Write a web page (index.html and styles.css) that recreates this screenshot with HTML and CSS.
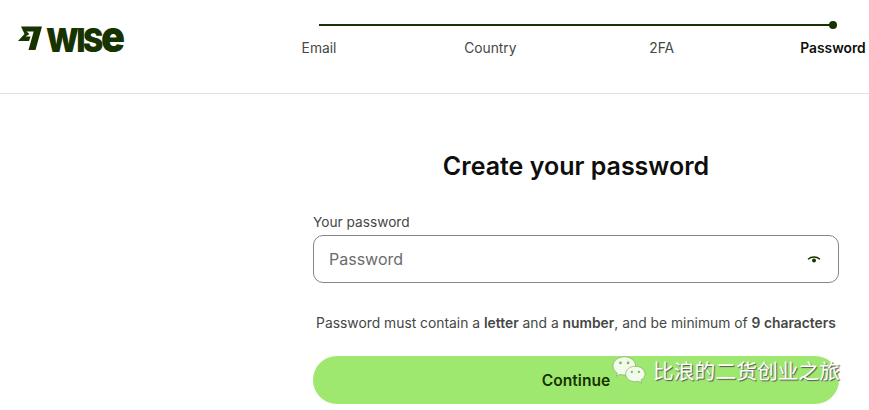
FILE: index.html
```html
<!DOCTYPE html>
<html lang="en">
<head>
  <meta charset="UTF-8">
  <meta name="viewport" content="width=device-width, initial-scale=1.0">
  <title>Create your password</title>
  <link rel="stylesheet" href="styles.css">
</head>
<body>
  <!-- Header -->
  <header class="header">
    <div class="logo">
      <svg class="logo-flag" width="24" height="24" viewBox="0 0 24 24">
        <path d="M3 0.500 H24 L17.500 24 H10.500 L15.700 5.500 H8.500 L11.500 8 L7.500 10.500 H12.500 L11 15 H0 L6.500 8 Z" fill="#163300"/>
      </svg>
      <span class="logo-text">WIS<span class="logo-e">e</span></span>
    </div>
    <div class="progress">
      <div class="progress-line"><span class="progress-dot"></span></div>
      <div class="steps">
        <span class="step"><span>Email</span></span>
        <span class="step"><span>Country</span></span>
        <span class="step"><span>2FA</span></span>
        <span class="step step-active"><span>Password</span></span>
      </div>
    </div>
  </header>

  <!-- Password form -->
  <main class="main">
    <h1>Create your password</h1>
    <label class="label" for="password">Your password</label>
    <div class="field">
      <input id="password" type="password" placeholder="Password">
      <svg class="eye" width="14" height="10" viewBox="0 0 14 10">
        <path d="M1 4.200 C4.500 1.200 9.500 1.200 13 4.200" fill="none" stroke="#163300" stroke-width="1.400"/>
        <circle cx="7" cy="5.600" r="2" fill="#163300"/>
      </svg>
    </div>
    <p class="hint">Password must contain a <b>letter</b> and a <b>number</b>, and be minimum of <b>9 characters</b></p>
    <button class="continue">Continue</button>
  </main>

  <!-- Watermark -->
  <div class="watermark">
    <svg width="34" height="32" viewBox="0 0 36 30">
      <path d="M13 1 C6.500 1 1 5.300 1 10.700 C1 13.800 2.800 16.400 5.600 18.200 L4.600 21.600 L8.600 19.600 C10 20.100 11.400 20.300 13 20.300 C19.500 20.300 25 16 25 10.700 C25 5.300 19.500 1 13 1 Z" fill="#f2fbea" stroke="#6f9c58" stroke-width="0.600"/>
      <path d="M24.500 11 C18.900 11 14.500 14.700 14.500 19.200 C14.500 23.700 18.900 27.400 24.500 27.400 C25.700 27.400 26.800 27.200 27.900 26.900 L31.500 29 L30.600 25.600 C33.200 24.100 35 21.800 35 19.200 C35 14.700 30.100 11 24.500 11 Z" fill="#f2fbea" stroke="#6f9c58" stroke-width="0.600"/>
      <circle cx="9" cy="7.500" r="1.400" fill="#7fb05f"/>
      <circle cx="17" cy="7.500" r="1.400" fill="#7fb05f"/>
      <circle cx="21" cy="17" r="1.200" fill="#7fb05f"/>
      <circle cx="28.500" cy="17" r="1.200" fill="#7fb05f"/>
    </svg>
    <span class="watermark-text">比浪的二货创业之旅</span>
  </div>
</body>
</html>
```

FILE: styles.css
```css
html, body {
  height: 100%;
}
body {
  font-family: Inter, "Liberation Sans", sans-serif;
  background: #fff;
  color: #454745;
  margin: 0;
  padding: 0;
  overflow: hidden;
}
.header {
  display: flex;
  height: 93px;
  border-bottom: 1px solid #e2e2e2;
}
.logo {
  display: flex;
  align-items: center;
  gap: 4px;
  width: 319px;
  height: 24px;
  margin-top: 26px;
  padding-left: 18px;
  box-sizing: border-box;
}
.logo-text {
  font-size: 33px;
  line-height: 24px;
  font-weight: 900;
  color: #163300;
  letter-spacing: -2.5px;
  transform: scaleX(0.92);
  transform-origin: left center;
}
.logo-e {
  font-size: 43px;
  letter-spacing: 0;
}
.progress {
  width: 514px;
  padding-top: 21px;
}
.progress-line {
  position: relative;
  height: 2px;
  margin-top: 3px;
  background: #163300;
}
.progress-dot {
  position: absolute;
  right: -4px;
  top: -3px;
  width: 8px;
  height: 8px;
  border-radius: 50%;
  background: #163300;
}
.steps {
  display: flex;
  justify-content: space-between;
  margin-top: 13px;
  font-size: 13.8px;
  line-height: 18px;
}
.step {
  display: flex;
  justify-content: center;
  width: 0;
  white-space: nowrap;
}
.step-active {
  font-weight: 600;
  color: #0e0f0c;
}
.main {
  width: 526px;
  margin-left: 313px;
}
h1 {
  margin: 56px 0 0;
  text-align: center;
  font-size: 25px;
  line-height: 32px;
  font-weight: 600;
  color: #0e0f0c;
}
.label {
  display: block;
  margin-top: 30px;
  font-size: 13.7px;
  line-height: 20px;
}
.field {
  display: flex;
  align-items: center;
  height: 48px;
  margin-top: 3px;
  padding: 0 17px 0 15px;
  box-sizing: border-box;
  border: 1px solid #868685;
  border-radius: 10px;
}
.field input {
  flex: 1;
  border: none;
  outline: none;
  padding: 0;
  font-family: inherit;
  font-size: 16px;
}
.field input::placeholder {
  color: #6a6c6a;
  opacity: 1;
}
.eye {
  margin-top: 2px;
}
.hint {
  margin: 31px 0 0;
  text-align: center;
  font-size: 13.85px;
  line-height: 18px;
}
.hint b {
  font-weight: 600;
}
.continue {
  display: block;
  width: 100%;
  height: 48px;
  margin-top: 24px;
  border: none;
  border-radius: 24px;
  background: #9fe870;
  color: #163300;
  font-family: inherit;
  font-size: 15.6px;
  font-weight: 600;
}
.watermark {
  position: absolute;
  left: 612px;
  top: 354px;
  display: flex;
  align-items: center;
  gap: 7px;
}
.watermark-text {
  font-family: "Noto Sans CJK SC", sans-serif;
  font-size: 20.8px;
  line-height: 30px;
  color: #fff;
  text-shadow: 1px 1px 1px #555;
}
```
